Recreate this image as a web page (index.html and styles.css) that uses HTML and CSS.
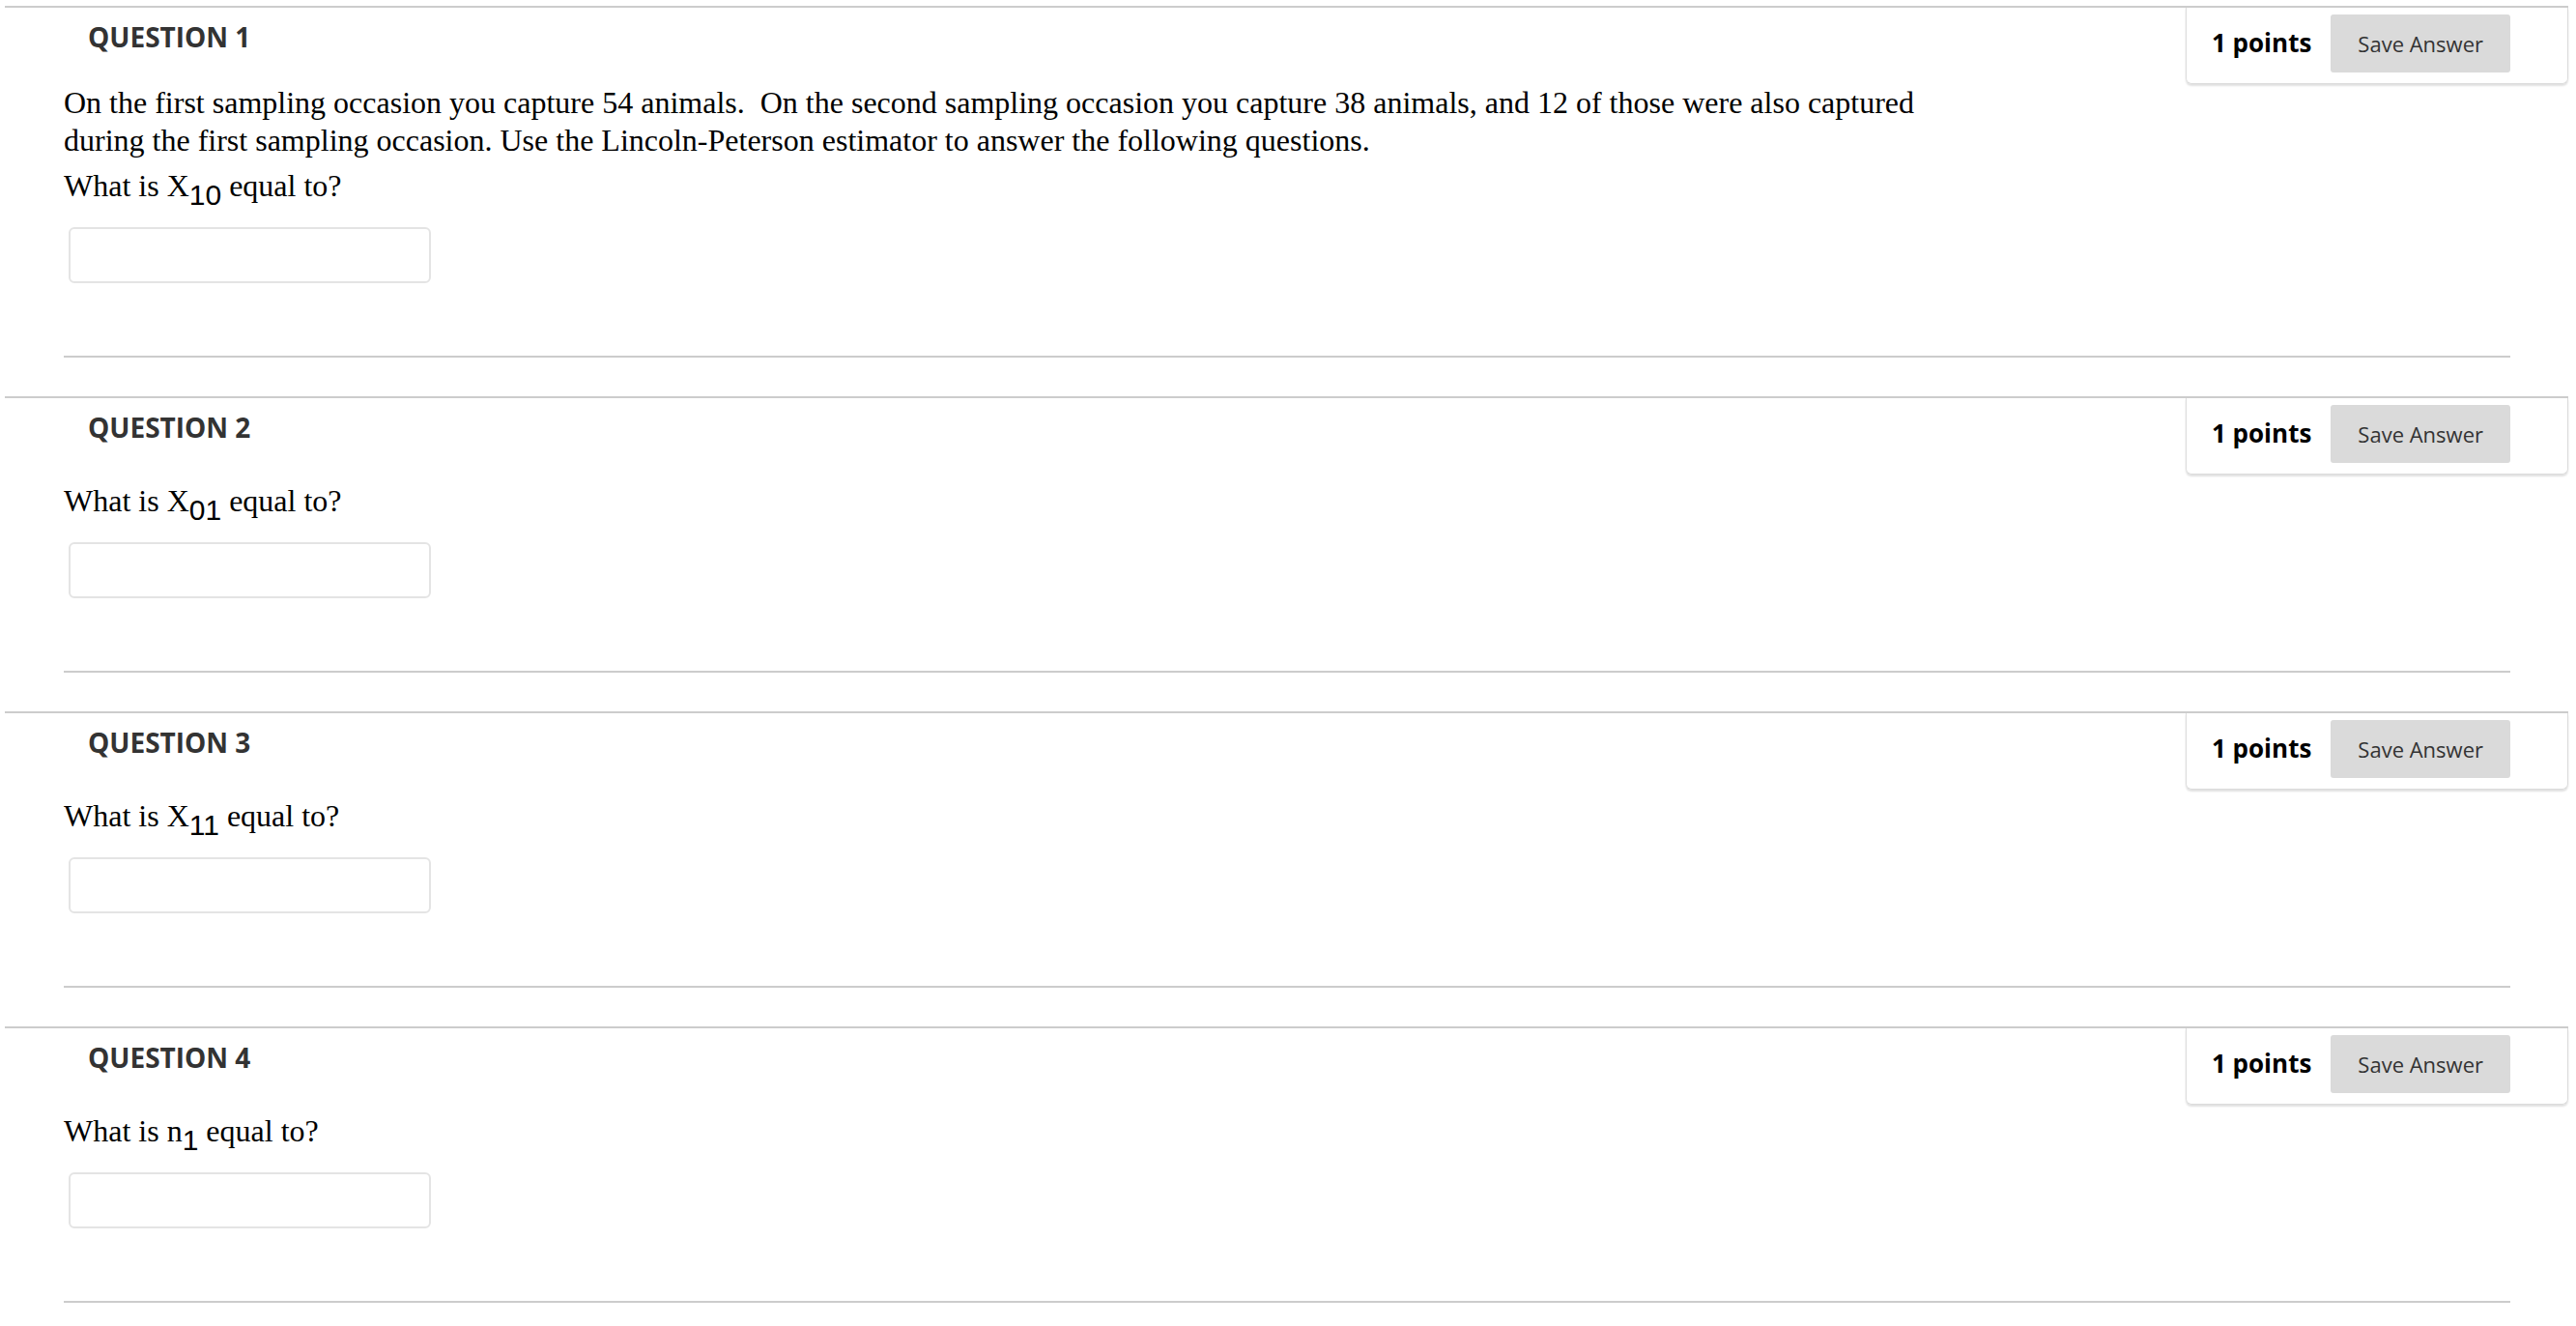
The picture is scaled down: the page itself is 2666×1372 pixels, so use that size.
FILE: index.html
```html
<!DOCTYPE html>
<html lang="en">
<head>
  <meta charset="UTF-8">
  <meta name="viewport" content="width=device-width, initial-scale=1.0">
  <title>Take Test</title>
  <link rel="stylesheet" href="styles.css">
</head>
<body>
  <div class="quiz">

    <div class="question">
      <div class="question-head">
        <h3 class="question-title">QUESTION 1</h3>
        <div class="points-box">
          <span class="points">1 points</span>
          <button class="save-btn">Save Answer</button>
        </div>
      </div>
      <div class="question-body">
        <p class="intro">On the first sampling occasion you capture 54 animals.&nbsp; On the second sampling occasion you capture 38 animals, and 12 of those were also captured<br>during the first sampling occasion. Use the Lincoln-Peterson estimator to answer the following questions.</p>
        <p class="ask">What is X<span class="sub">10</span> equal to?</p>
        <input type="text" class="answer">
      </div>
    </div>

    <div class="question">
      <div class="question-head">
        <h3 class="question-title">QUESTION 2</h3>
        <div class="points-box">
          <span class="points">1 points</span>
          <button class="save-btn">Save Answer</button>
        </div>
      </div>
      <div class="question-body">
        <p class="ask">What is X<span class="sub">01</span> equal to?</p>
        <input type="text" class="answer">
      </div>
    </div>

    <div class="question">
      <div class="question-head">
        <h3 class="question-title">QUESTION 3</h3>
        <div class="points-box">
          <span class="points">1 points</span>
          <button class="save-btn">Save Answer</button>
        </div>
      </div>
      <div class="question-body">
        <p class="ask">What is X<span class="sub">11</span> equal to?</p>
        <input type="text" class="answer">
      </div>
    </div>

    <div class="question">
      <div class="question-head">
        <h3 class="question-title">QUESTION 4</h3>
        <div class="points-box">
          <span class="points">1 points</span>
          <button class="save-btn">Save Answer</button>
        </div>
      </div>
      <div class="question-body">
        <p class="ask">What is n<span class="sub">1</span> equal to?</p>
        <input type="text" class="answer">
      </div>
    </div>

  </div>
</body>
</html>
```

FILE: styles.css
```css
body {
  margin: 0;
  background-color: #fff;
  font-family: "Open Sans", Arial, sans-serif;
}

.quiz {
  padding: 6px 8px 0 5px;
}

.question {
  border-top: 2px solid #cccccc;
  padding-bottom: 40px;
}

.question-head {
  display: flex;
  align-items: flex-start;
}

.question-title {
  margin: 11px 0 0 86px;
  font-size: 28px;
  font-weight: bold;
  color: #333;
  line-height: 38px;
}

.points-box {
  margin-left: auto;
  display: flex;
  align-items: center;
  gap: 20px;
  padding: 7px 59px 11px 26px;
  border: 1px solid #dcdcdc;
  border-top: none;
  border-radius: 0 0 6px 6px;
  box-shadow: 0 2px 2px rgba(0, 0, 0, 0.12);
}

.points {
  font-size: 26px;
  font-weight: bold;
  color: #000;
  margin-bottom: 3px;
}

.save-btn {
  height: 60px;
  padding: 0 28px;
  border: none;
  border-radius: 3px;
  background-color: #dadada;
  color: #333;
  font-family: "Open Sans", Arial, sans-serif;
  font-size: 22px;
}

.question-body {
  margin: 0 60px 0 61px;
  padding-bottom: 75px;
  border-bottom: 2px solid #cccccc;
  font-family: "Liberation Serif", "Times New Roman", serif;
  font-size: 32px;
  line-height: 39px;
  color: #000;
}

.intro {
  margin: 0;
}

.ask {
  margin: 8px 0 23px;
}

.sub {
  font-family: "Liberation Sans", Arial, sans-serif;
  font-size: 30px;
  line-height: 0;
  vertical-align: -9px;
}

.answer {
  display: block;
  box-sizing: border-box;
  width: 375px;
  height: 58px;
  margin-left: 5px;
  border: 2px solid #e4e4e4;
  border-radius: 6px;
  background-color: #fff;
}
```
